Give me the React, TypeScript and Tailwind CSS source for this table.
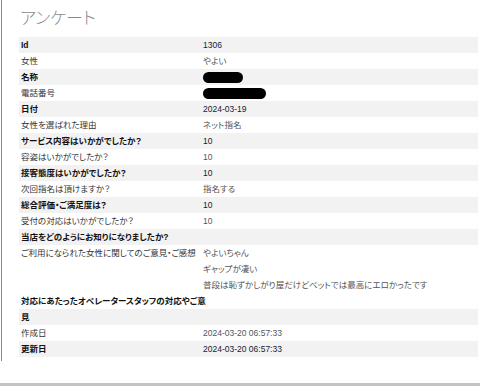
import React from "react";

type Row = { label: string; value?: React.ReactNode; bold: boolean };

const Pill = ({ w }: { w: number }) => (
  <span className="inline-block bg-black rounded-full align-middle" style={{ width: w, height: 11 }} />
);

const rows: Row[] = [
  { label: "Id", value: "1306", bold: true },
  { label: "女性", value: "やよい", bold: false },
  { label: "名称", value: <Pill w={40} />, bold: true },
  { label: "電話番号", value: <Pill w={63} />, bold: false },
  { label: "日付", value: "2024-03-19", bold: true },
  { label: "女性を選ばれた理由", value: "ネット指名", bold: false },
  { label: "サービス内容はいかがでしたか？", value: "10", bold: true },
  { label: "容姿はいかがでしたか？", value: "10", bold: false },
  { label: "接客態度はいかがでしたか？", value: "10", bold: true },
  { label: "次回指名は頂けますか？", value: "指名する", bold: false },
  { label: "総合評価・ご満足度は？", value: "10", bold: true },
  { label: "受付の対応はいかがでしたか？", value: "10", bold: false },
  { label: "当店をどのようにお知りになりましたか?", value: "", bold: true },
];

function DataRow({ r }: { r: Row }) {
  return (
    <div className={`flex h-[16px] items-center ${r.bold ? "bg-[#f2f2f2]" : "bg-white"}`}>
      <div
        className={`w-[184px] shrink-0 pl-[2px] whitespace-nowrap ${
          r.bold ? "font-bold text-[#111]" : "text-[#333]"
        }`}
      >
        {r.label}
      </div>
      <div className={`flex items-center ${r.bold ? "text-[#1a1a2a]" : "text-[#555]"}`}>{r.value}</div>
    </div>
  );
}

export default function App() {
  return (
    <div
      className="w-[480px] h-[386px] bg-white relative overflow-hidden text-[8.5px] leading-[16px] [font-feature-settings:'palt']"
      style={{ fontFamily: '"Liberation Sans", "Noto Sans CJK JP", sans-serif' }}
    >
      <div className="ml-px border-l border-[#8a8a8a] pl-[17px] pr-[2px] pb-[4px]">
        <div
          className="h-[37px] pt-[5px] pl-[1px] text-[17px] leading-[24px] text-[#8a8a8a] font-light"
          style={{ fontFamily: '"Noto Sans CJK JP", sans-serif' }}
        >
          アンケート
        </div>
        {rows.map((r, i) => (
          <DataRow key={i} r={r} />
        ))}
        <div className="flex bg-white">
          <div className="w-[184px] shrink-0 pl-[2px] text-[#333] whitespace-nowrap leading-[16px]">
            ご利用になられた女性に関してのご意見・ご感想
          </div>
          <div className="flex flex-col text-[#555]">
            <div className="h-[16px]">やよいちゃん</div>
            <div className="h-[16px]">ギャップが凄い</div>
            <div className="h-[16px]">普段は恥ずかしがり屋だけどベットでは最高にエロかったです</div>
          </div>
        </div>
        <div className="h-[16px] bg-white pl-[2px] font-bold text-[#111] whitespace-nowrap">
          対応にあたったオペレータースタッフの対応やご意
        </div>
        <div className="h-[16px] bg-[#f2f2f2] pl-[2px] font-bold text-[#111]">見</div>
        <DataRow r={{ label: "作成日", value: "2024-03-20 06:57:33", bold: false }} />
        <DataRow r={{ label: "更新日", value: "2024-03-20 06:57:33", bold: true }} />
      </div>
      <div className="absolute left-0 right-0 bottom-0 h-[3px] bg-[#c4c4c4]" />
    </div>
  );
}
